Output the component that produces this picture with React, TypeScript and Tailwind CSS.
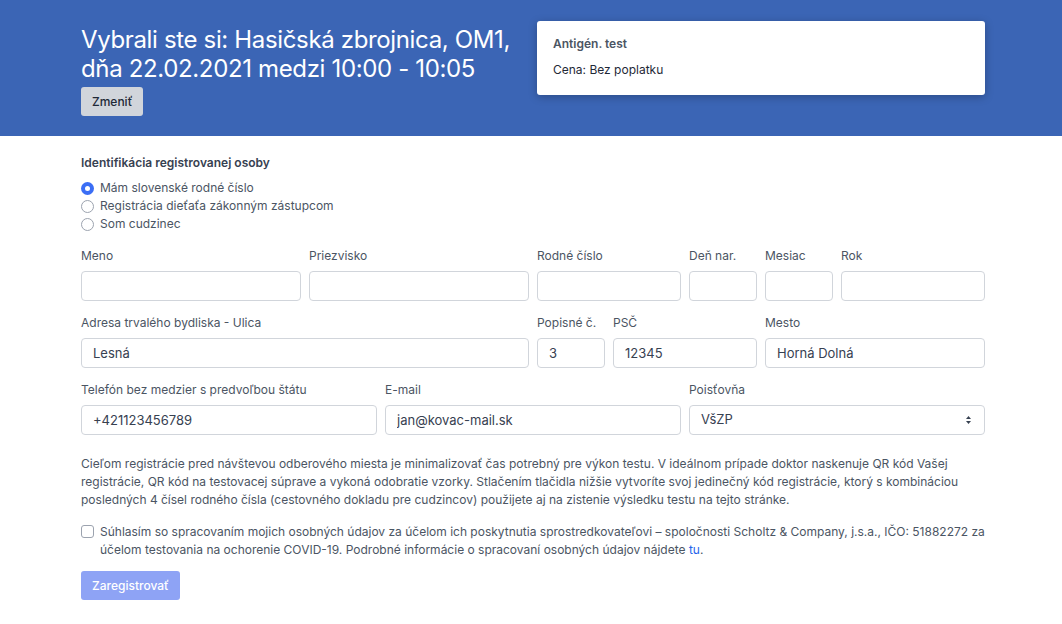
import { useState } from "react";

const Field = ({
  label,
  value = "",
  span,
}: {
  label: string;
  value?: string;
  span: string;
}) => (
  <div className={`${span} flex flex-col`}>
    <label className="text-[12px] leading-[16px] text-[#4b5563] mb-[7px] mt-[5px]">{label}</label>
    <input
      defaultValue={value}
      className="h-[30px] w-full rounded-[4px] border border-[#d1d5db] bg-white px-[11px] text-[13px] text-[#374151] outline-none"
    />
  </div>
);

const Radio = ({ checked, label, onClick }: { checked: boolean; label: string; onClick: () => void }) => (
  <div className="flex items-center h-[18px] cursor-pointer" onClick={onClick}>
    {checked ? (
      <span className="w-[13px] h-[13px] rounded-full bg-[#3b6ef5] flex items-center justify-center">
        <span className="w-[5px] h-[5px] rounded-full bg-white" />
      </span>
    ) : (
      <span className="w-[13px] h-[13px] rounded-full border border-[#9ca3af] bg-white" />
    )}
    <span className="ml-[6px] text-[12px] text-[#4b5563]">{label}</span>
  </div>
);

const options = [
  "Mám slovenské rodné číslo",
  "Registrácia dieťaťa zákonným zástupcom",
  "Som cudzinec",
];

export default function App() {
  const [selected, setSelected] = useState(0);

  return (
    <div className="min-h-screen bg-white font-['Inter',sans-serif] text-[#374151]">
      <header className="bg-[#3b65b5] h-[136px]">
        <div className="ml-[81px] w-[904px] grid grid-cols-12 gap-x-[8px] pt-[21px]">
          <div className="col-span-6 pt-[4px]">
            <h1 className="text-[24px] leading-[29px] text-white tracking-[-0.35px]">
              Vybrali ste si: Hasičská zbrojnica, OM1, dňa 22.02.2021 medzi 10:00 - 10:05
            </h1>
            <button className="mt-[4px] h-[29px] px-[11px] rounded-[3px] bg-[#d1d5db] text-[12px] font-medium text-[#1f2937]">
              Zmeniť
            </button>
          </div>
          <div className="col-span-6 h-[74px] rounded-[3px] bg-white shadow-[0_2px_8px_rgba(0,0,0,0.25)] px-[16px] pt-[15px]">
            <div className="text-[12px] font-semibold text-[#4b5563] leading-[16px]">Antigén. test</div>
            <div className="mt-[10px] text-[12px] text-[#1f2937] leading-[16px]">Cena: Bez poplatku</div>
          </div>
        </div>
      </header>

      <main className="ml-[81px] w-[904px] pt-[19px]">
        <div className="text-[12px] font-semibold text-[#374151] leading-[16px] mb-[8px]">
          Identifikácia registrovanej osoby
        </div>
        <div className="flex flex-col">
          {options.map((o, i) => (
            <Radio key={o} label={o} checked={selected === i} onClick={() => setSelected(i)} />
          ))}
        </div>

        <div className="grid grid-cols-12 gap-x-[8px] gap-y-[9px] mt-[10px]">
          <Field label="Meno" span="col-span-3" />
          <Field label="Priezvisko" span="col-span-3" />
          <Field label="Rodné číslo" span="col-span-2" />
          <Field label="Deň nar." span="col-span-1" />
          <Field label="Mesiac" span="col-span-1" />
          <Field label="Rok" span="col-span-2" />

          <Field label="Adresa trvalého bydliska - Ulica" value="Lesná" span="col-span-6" />
          <Field label="Popisné č." value="3" span="col-span-1" />
          <Field label="PSČ" value="12345" span="col-span-2" />
          <Field label="Mesto" value="Horná Dolná" span="col-span-3" />

          <Field label="Telefón bez medzier s predvoľbou štátu" value="+421123456789" span="col-span-4" />
          <Field label="E-mail" value="jan@kovac-mail.sk" span="col-span-4" />
          <div className="col-span-4 flex flex-col">
            <label className="text-[12px] leading-[16px] text-[#4b5563] mb-[7px] mt-[5px]">Poisťovňa</label>
            <div className="h-[30px] w-full rounded-[4px] border border-[#d1d5db] bg-white px-[11px] flex items-center justify-between">
              <span className="text-[13px] text-[#374151]">VšZP</span>
              <svg width="7" height="10" viewBox="0 0 7 10" className="mr-[1px]">
                <path d="M3.5 1 L6 4 H1 Z" fill="#374151" />
                <path d="M3.5 9 L6 6 H1 Z" fill="#374151" />
              </svg>
            </div>
          </div>
        </div>

        <p className="mt-[20px] text-[12px] leading-[18px] text-[#4b5563]">
          Cieľom registrácie pred návštevou odberového miesta je minimalizovať čas potrebný pre výkon testu. V ideálnom prípade doktor naskenuje QR kód Vašej registrácie, QR kód na testovacej súprave a vykoná odobratie vzorky. Stlačením tlačidla nižšie vytvoríte svoj jedinečný kód registrácie, ktorý s kombináciou posledných 4 čísel rodného čísla (cestovného dokladu pre cudzincov) použijete aj na zistenie výsledku testu na tejto stránke.
        </p>

        <div className="mt-[14px] flex items-start">
          <span className="mt-[2px] w-[13px] h-[13px] shrink-0 rounded-[3px] border border-[#9ca3af] bg-white" />
          <p className="ml-[6px] text-[12px] leading-[18px] text-[#4b5563]">
            Súhlasím so spracovaním mojich osobných údajov za účelom ich poskytnutia sprostredkovateľovi – spoločnosti Scholtz &amp; Company, j.s.a., IČO: 51882272 za účelom testovania na ochorenie COVID-19. Podrobné informácie o spracovaní osobných údajov nájdete{" "}
            <a className="text-[#2563eb]">tu</a>.
          </p>
        </div>

        <button className="mt-[12px] h-[29px] px-[11px] rounded-[3px] bg-[#8ea3f5] text-[12px] font-medium text-white">
          Zaregistrovať
        </button>
      </main>
    </div>
  );
}
